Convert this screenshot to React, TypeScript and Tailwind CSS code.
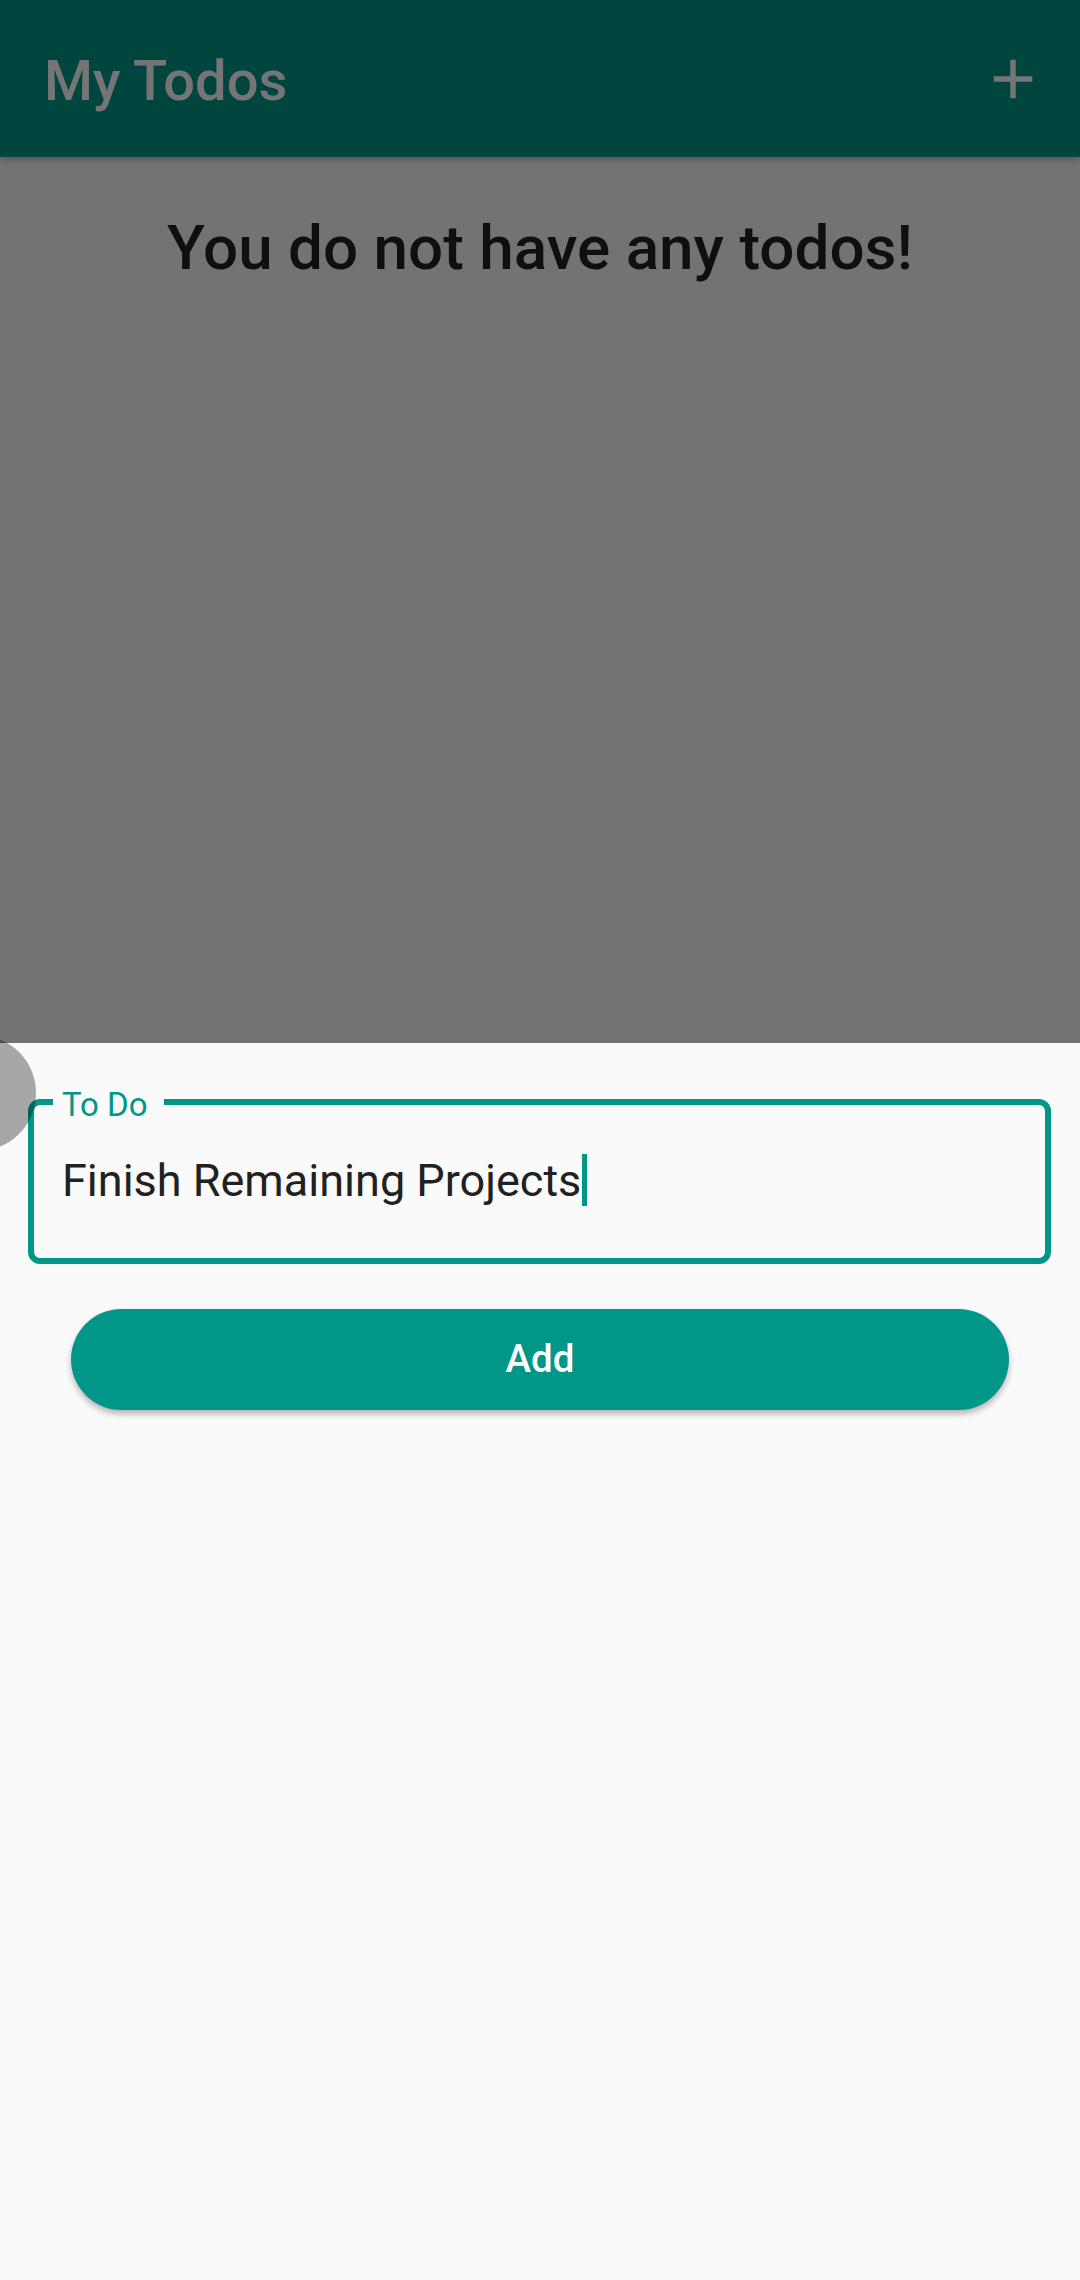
import React from "react";

export default function App() {
  return (
    <div
      className="relative w-[1080px] h-[2280px] overflow-hidden bg-[#fafafa]"
      style={{ fontFamily: "Roboto, 'Noto Sans', sans-serif" }}
    >
      {/* App bar */}
      <header className="flex items-start justify-between h-[157px] bg-[#009688] shadow-[0_3px_6px_rgba(0,0,0,0.25)] relative z-10">
        <h1 className="pl-[44px] pt-[53px] text-[56px] leading-none font-medium text-white">
          My Todos
        </h1>
        <button className="mt-[46px] mr-[34px] w-[66px] h-[66px]">
          <svg viewBox="0 0 24 24" width="66" height="66">
            <path d="M19 13h-6v6h-2v-6H5v-2h6V5h2v6h6v2z" fill="#ffffff" />
          </svg>
        </button>
      </header>

      {/* Body */}
      <main className="flex flex-col items-center">
        <p className="mt-[60px] text-[62px] leading-none font-medium text-black/[0.87]">
          You do not have any todos!
        </p>
      </main>

      {/* Modal scrim */}
      <div className="absolute inset-0 z-20 bg-black/[0.54]" />

      {/* Bottom sheet */}
      <div className="absolute left-0 right-0 top-[1043px] bottom-0 z-30 bg-[#fafafa] pl-[28px] pr-[29px] pt-[56px]">
        <div className="relative h-[165px] border-[6px] border-[#009688] rounded-[12px]">
          <span className="absolute left-[19px] top-[-16.8px] pl-[9px] pr-[16px] bg-[#fafafa] text-[33px] leading-[33px] text-[#009688]">
            To Do
          </span>
          <div className="pl-[28px] pt-[48.6px] text-[45px] leading-[52px] text-[#212121] whitespace-nowrap">
            Finish Remaining Projects
            <span className="inline-block ml-[1px] w-[5px] h-[52px] bg-[#009688] align-[-10px]" />
          </div>
        </div>

        <button className="mt-[45px] mx-[43px] w-[938px] h-[101px] rounded-full bg-[#009688] flex items-center justify-center shadow-[0_4px_6px_rgba(0,0,0,0.28)]">
          <span className="text-[38.5px] leading-none font-medium text-white">Add</span>
        </button>
      </div>

      {/* Touch indicator */}
      <div className="absolute z-40 left-[-80px] top-[1035px] w-[116px] h-[116px] rounded-full bg-black/[0.33]" />
    </div>
  );
}
